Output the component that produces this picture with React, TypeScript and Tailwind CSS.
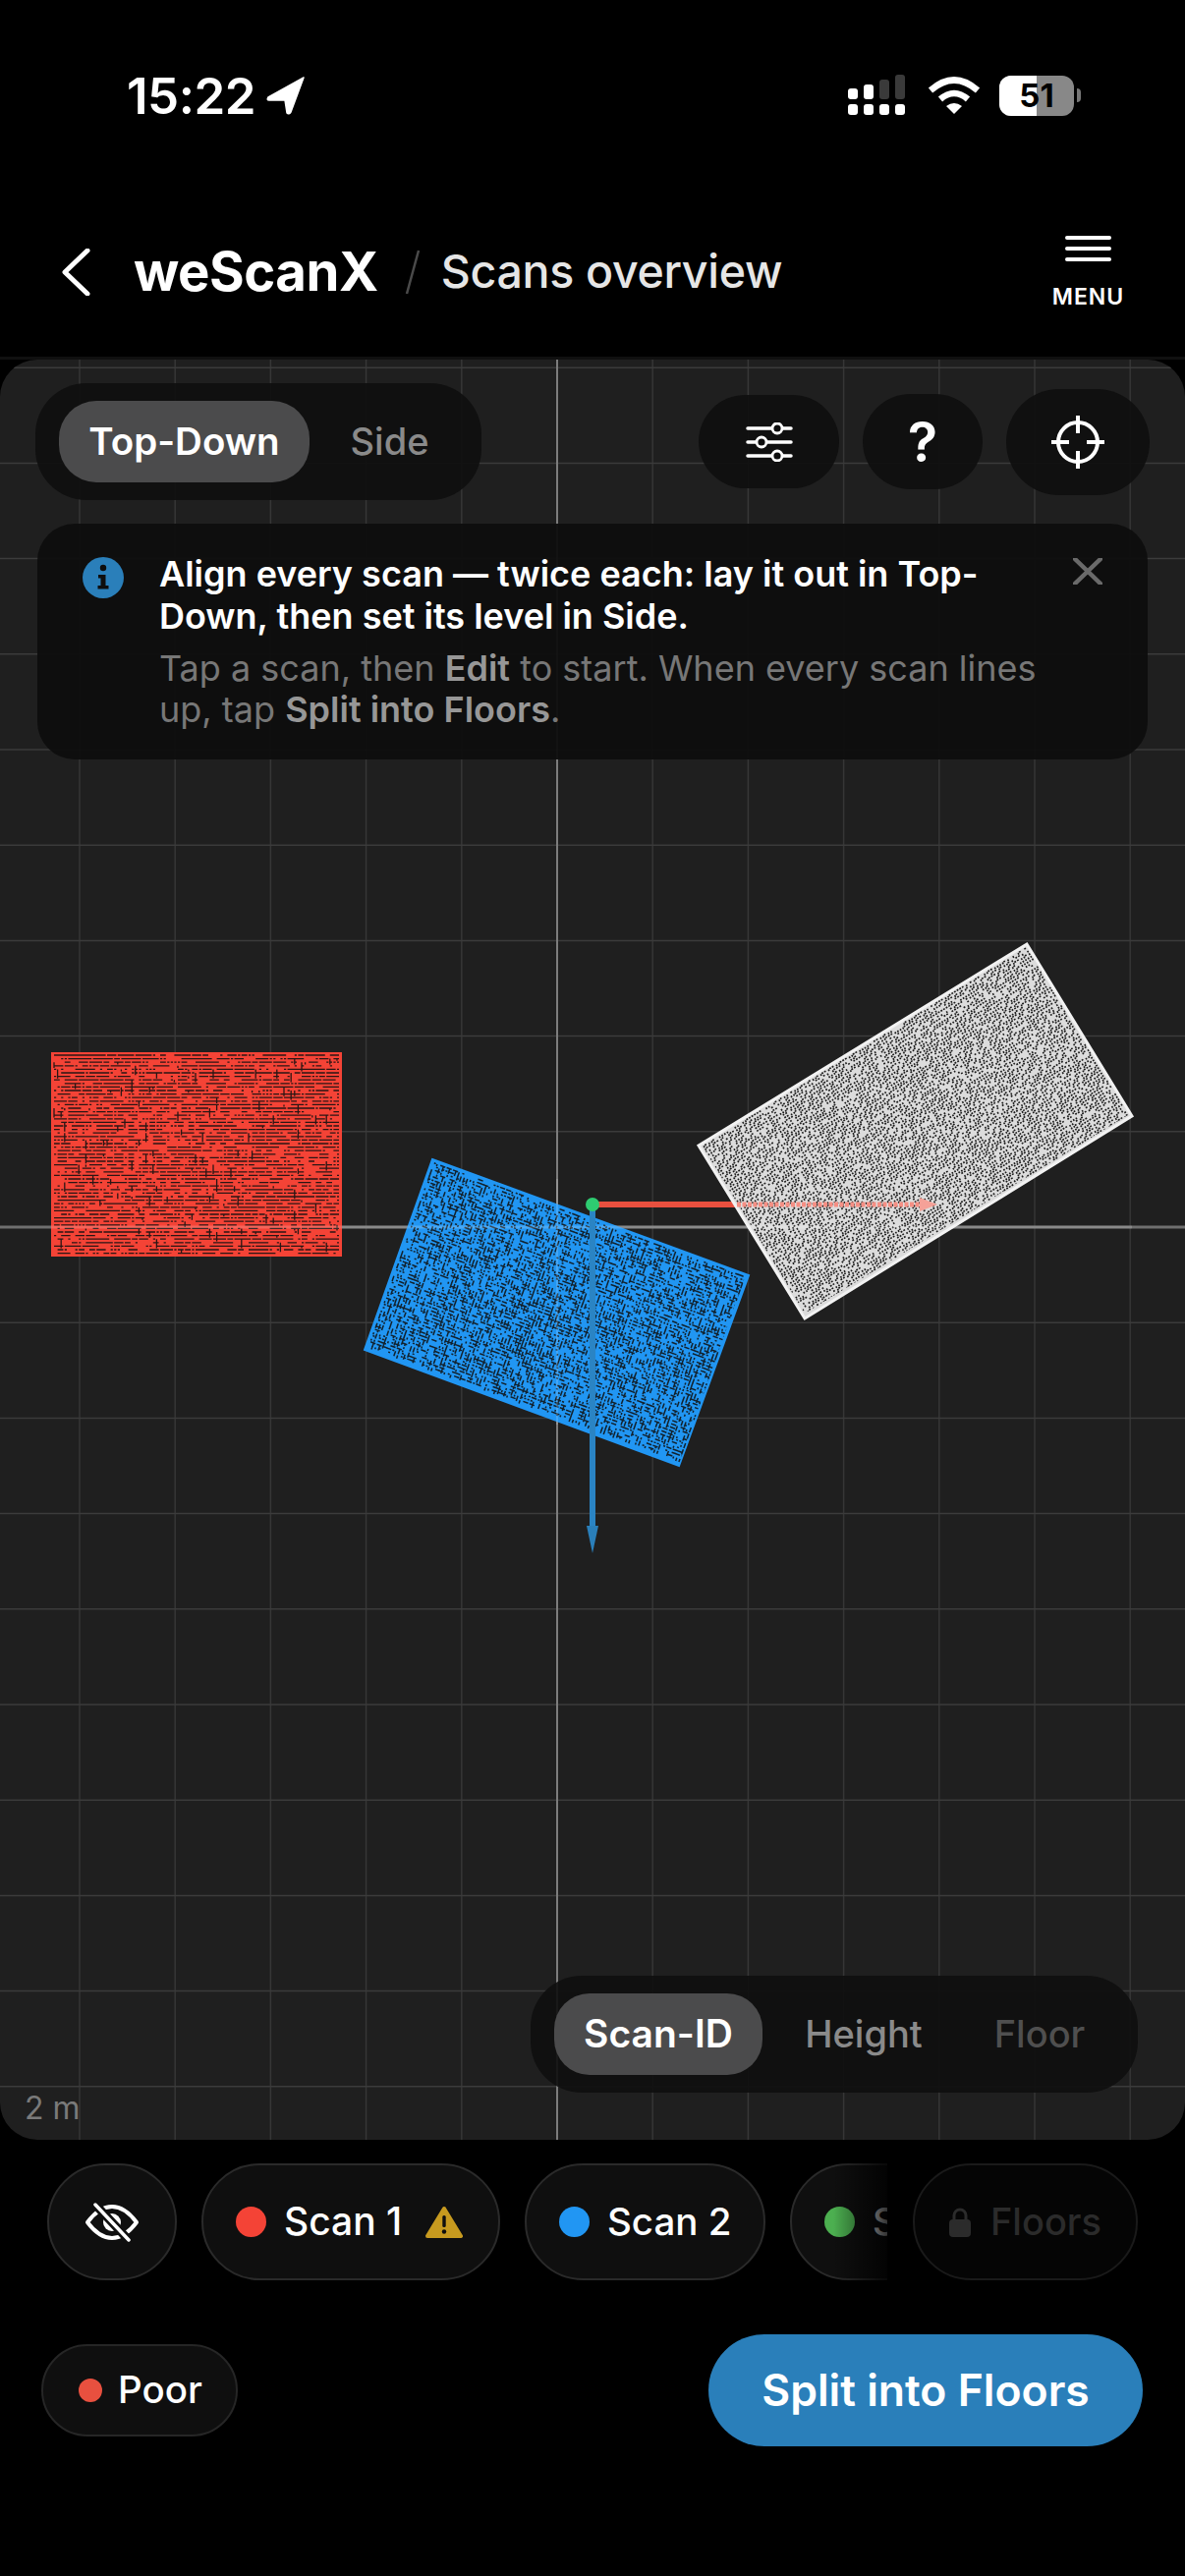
import { useMemo } from 'react';

type Pt = [number, number];

const RED_QUAD: Pt[] = [[52, 1071], [348, 1071], [348, 1279], [52, 1279]];
const BLUE_QUAD: Pt[] = [[440, 1180], [762, 1298], [691, 1492], [371, 1374]];
const WHITE_QUAD: Pt[] = [[1045, 961], [1152, 1136], [819, 1342], [711, 1166]];

function makeRandom(seed: number) {
  let a = seed;
  return () => {
    a = (a + 0x6d2b79f5) | 0;
    let t = Math.imul(a ^ (a >>> 15), 1 | a);
    t = (t + Math.imul(t ^ (t >>> 7), 61 | t)) ^ t;
    return ((t ^ (t >>> 14)) >>> 0) / 4294967296;
  };
}

// dark gaps of a point cloud, as short dashes following the sides of the quad
function speckle(q: Pt[], seed: number, cell: number, density: number, mix: number, maxLen: number) {
  const rnd = makeRandom(seed);
  const w = Math.hypot(q[1][0] - q[0][0], q[1][1] - q[0][1]);
  const h = Math.hypot(q[2][0] - q[1][0], q[2][1] - q[1][1]);
  const at = (x: number, y: number) => {
    const u = Math.min(x / w, 1);
    const v = Math.min(y / h, 1);
    const px = q[0][0] + (q[1][0] - q[0][0]) * u + (q[3][0] - q[0][0]) * v;
    const py = q[0][1] + (q[1][1] - q[0][1]) * u + (q[3][1] - q[0][1]) * v;
    return `${px.toFixed(1)} ${py.toFixed(1)}`;
  };
  const margin = 3;
  let d = '';
  for (let y = margin; y < h - margin; y += cell) {
    for (let x = margin; x < w - margin; x += cell) {
      if (rnd() > density) continue;
      const len = cell * (0.6 + Math.floor(rnd() * maxLen));
      if (rnd() < mix) {
        d += `M${at(x, y)}L${at(x, Math.min(y + len, h - margin))}`;
      } else {
        d += `M${at(x, y)}L${at(Math.min(x + len, w - margin), y)}`;
      }
    }
  }
  return d;
}

const toPoints = (q: Pt[]) => q.map((p) => p.join(',')).join(' ');

function ScanCanvas() {
  const red = useMemo(() => speckle(RED_QUAD, 11, 3.6, 0.6, 0.05, 3), []);
  const blue = useMemo(() => speckle(BLUE_QUAD, 23, 3.4, 0.72, 0.5, 2), []);
  const white = useMemo(() => speckle(WHITE_QUAD, 37, 3.1, 0.82, 0.5, 1), []);

  const xs = Array.from({ length: 12 }, (_, i) => 567 + (i - 5) * 97.2);
  const ys = Array.from({ length: 19 }, (_, i) => 1249 + (i - 9) * 97.2);

  return (
    <svg viewBox="0 366 1206 1812" className="absolute inset-0 h-full w-full">
      {xs.map((x) => (
        <line key={x} x1={x} x2={x} y1={366} y2={2178} stroke="#363636" strokeWidth={1.5} />
      ))}
      {ys.map((y) => (
        <line key={y} x1={0} x2={1206} y1={y} y2={y} stroke="#3b3b3b" strokeWidth={1.5} />
      ))}
      <line x1={567} x2={567} y1={366} y2={2178} stroke="#7c7c7c" strokeWidth={2} />
      <line x1={0} x2={1206} y1={1249} y2={1249} stroke="#6f6f6f" strokeWidth={3} />

      <line x1={603} x2={760} y1={1226} y2={1226} stroke="#e8503f" strokeWidth={6} />

      <polygon points={toPoints(RED_QUAD)} fill="#f44336" />
      <path d={red} stroke="#2a1614" strokeWidth={1.3} fill="none" />

      <polygon points={toPoints(BLUE_QUAD)} fill="#2196f3" stroke="#2196f3" strokeWidth={2} />
      <path d={blue} stroke="#12222e" strokeWidth={1.5} fill="none" />

      <polygon points={toPoints(WHITE_QUAD)} fill="#dcdcdc" stroke="#f2f2f2" strokeWidth={3} />
      <path d={white} stroke="#1c1c1c" strokeWidth={1.6} fill="none" />

      <line x1={52} x2={1152} y1={1249} y2={1249} stroke="#ffffff" strokeOpacity={0.18} strokeWidth={3} />
      <line x1={567} x2={567} y1={1200} y2={1450} stroke="#ffffff" strokeOpacity={0.16} strokeWidth={2} />

      <line x1={750} x2={945} y1={1226} y2={1226} stroke="#f58f84" strokeWidth={5} strokeDasharray="4 1.5" />
      <path d="M936 1219 L954 1226 L936 1233 Z" fill="#f5a198" />

      <line x1={603} x2={603} y1={1230} y2={1560} stroke="#2a84c4" strokeWidth={6} />
      <path d="M597 1553 L609 1553 L603 1581 Z" fill="#2a7fba" />
      <circle cx={603} cy={1226} r={7} fill="#2ecc71" />
    </svg>
  );
}

function StatusBar() {
  return (
    <div className="flex h-[190px] items-start justify-between pt-[72px] pl-[129px] pr-[106px]">
      <div className="flex h-[50px] items-center gap-[11px]">
        <span className="text-[51px] font-semibold leading-none tracking-[-0.5px] text-white">15:22</span>
        <svg width="40" height="39" viewBox="0 0 40 39">
          <path d="M38 1 L2 21 Q0 24 3 24 L19 24 L21 37 Q23 39 25 36 Z" fill="#fff" stroke="#fff" strokeWidth={1.5} strokeLinejoin="round" />
        </svg>
      </div>
      <div className="flex items-center gap-[23px] pt-[4px]">
        <svg width="58" height="42" viewBox="0 0 58 42">
          <rect x="0" y="30" width="10" height="11" rx="3" fill="#fff" />
          <rect x="16" y="30" width="10" height="11" rx="3" fill="#fff" />
          <rect x="32" y="30" width="10" height="11" rx="3" fill="#fff" />
          <rect x="48" y="30" width="10" height="11" rx="3" fill="#fff" />
          <rect x="0" y="14" width="10" height="11" rx="3" fill="#fff" />
          <rect x="16" y="10" width="10" height="15" rx="3" fill="#fff" />
          <rect x="32" y="5" width="10" height="20" rx="3" fill="#3a3a3a" />
          <rect x="48" y="0" width="10" height="25" rx="3" fill="#3a3a3a" />
        </svg>
        <svg width="54" height="38" viewBox="0 0 54 38" className="-mr-[4px]">
          <path d="M3 14 Q27 -7 51 14" fill="none" stroke="#fff" strokeWidth={6.5} />
          <path d="M13 23 Q27 11 41 23" fill="none" stroke="#fff" strokeWidth={6.5} />
          <path d="M19 30 Q27 24 35 30 L27 38 Z" fill="#fff" />
        </svg>
        <div className="flex items-center gap-[3px]">
          <div className="relative flex h-[41px] w-[76px] items-center justify-center overflow-hidden rounded-[12px] bg-[#888888]">
            <div className="absolute inset-y-0 left-0 w-[38px] bg-white" />
            <span className="relative text-[33px] font-bold leading-none text-black">51</span>
          </div>
          <div className="h-[14px] w-[4px] rounded-r-full bg-[#777777]" />
        </div>
      </div>
    </div>
  );
}

function NavBar() {
  return (
    <div className="flex h-[176px] items-center justify-between border-b-[3px] border-[#101010] pl-[62px] pr-[62px]">
      <div className="flex items-center">
        <svg width="32" height="48" viewBox="0 0 32 48" className="mr-[42px]">
          <path d="M27 2 L4 24 L27 46" fill="none" stroke="#fff" strokeWidth={5} strokeLinecap="round" strokeLinejoin="round" />
        </svg>
        <span className="text-[54.5px] font-bold leading-none tracking-[-0.5px] text-white">weScanX</span>
        <svg width="16" height="46" viewBox="0 0 16 46" className="ml-[27px] mr-[21px]">
          <line x1="14" y1="1" x2="2" y2="45" stroke="#4a4a4a" strokeWidth={2.5} />
        </svg>
        <span className="text-[46.5px] font-medium leading-none tracking-[-0.3px] text-[#e6e6e6]">Scans overview</span>
      </div>
      <div className="flex w-[73px] flex-col items-center gap-[25px] pt-[1px]">
        <div className="flex w-[47px] flex-col gap-[7px]">
          <div className="h-[4px] rounded-full bg-white" />
          <div className="h-[4px] rounded-full bg-white" />
          <div className="h-[4px] rounded-full bg-white" />
        </div>
        <span className="text-[23px] font-semibold leading-none tracking-[1px] text-white">MENU</span>
      </div>
    </div>
  );
}

function ViewToggle() {
  return (
    <div className="flex h-[119px] w-[454px] items-center rounded-[52px] bg-[#0e0e0e]/90 pl-[24px] pr-[24px]">
      <div className="flex h-[83px] w-[255px] items-center justify-center rounded-[38px] bg-[#4b4b4c] text-[38.5px] font-semibold text-white">
        Top-Down
      </div>
      <div className="flex flex-1 justify-center pl-[12px] text-[38px] font-medium text-[#8a8a8a]">Side</div>
    </div>
  );
}

function CanvasButtons() {
  return (
    <div className="flex items-center gap-[24px]">
      <div className="flex h-[95px] w-[143px] items-center justify-center rounded-full bg-[#0e0e0e]/90">
        <svg width="48" height="40" viewBox="0 0 48 40">
          <g stroke="#fff" strokeWidth={3.5} strokeLinecap="round">
            <line x1="2" y1="6" x2="46" y2="6" />
            <line x1="2" y1="20" x2="46" y2="20" />
            <line x1="2" y1="34" x2="46" y2="34" />
          </g>
          <g fill="#0e0e0e" stroke="#fff" strokeWidth={2.8}>
            <circle cx="32" cy="6" r="5" />
            <circle cx="16" cy="20" r="5" />
            <circle cx="32" cy="34" r="5" />
          </g>
        </svg>
      </div>
      <div className="flex h-[97px] w-[122px] items-center justify-center rounded-full bg-[#0e0e0e]/90 text-[56px] font-semibold leading-none text-white">
        ?
      </div>
      <div className="flex h-[108px] w-[146px] items-center justify-center rounded-full bg-[#0e0e0e]/90">
        <svg width="56" height="56" viewBox="0 0 56 56">
          <circle cx="28" cy="28" r="20" fill="none" stroke="#fff" strokeWidth={4} />
          <g stroke="#fff" strokeWidth={4}>
            <line x1="28" y1="1" x2="28" y2="19" />
            <line x1="28" y1="37" x2="28" y2="55" />
            <line x1="1" y1="28" x2="19" y2="28" />
            <line x1="37" y1="28" x2="55" y2="28" />
          </g>
        </svg>
      </div>
    </div>
  );
}

function InfoBanner() {
  return (
    <div className="relative mx-[38px] mt-[24px] flex h-[240px] gap-[36px] rounded-[38px] bg-[#0e0e0e]/95 pl-[46px] pt-[30px]">
      <svg width="42" height="42" viewBox="0 0 42 42" className="mt-[4px] shrink-0">
        <circle cx="21" cy="21" r="21" fill="#2a7fba" />
        <circle cx="21" cy="11" r="3.2" fill="#0e0e0e" />
        <path d="M16 18 H23.5 V29 H26.5 V32.5 H15.5 V29 H18.5 V21.5 H16 Z" fill="#0e0e0e" />
      </svg>
      <div>
        <p className="whitespace-nowrap text-[36px] font-semibold leading-[43px] text-white">
          Align every scan — twice each: lay it out in Top-
          <br />
          Down, then set its level in Side.
        </p>
        <p className="mt-[11px] whitespace-nowrap text-[36px] leading-[41.5px] text-[#777777]">
          Tap a scan, then <span className="font-semibold text-[#979797]">Edit</span> to start. When every scan lines
          <br />
          up, tap <span className="font-semibold text-[#979797]">Split into Floors</span>.
        </p>
      </div>
      <svg width="30" height="27" viewBox="0 0 30 27" className="absolute right-[46px] top-[35px]">
        <path d="M2 1 L28 26 M28 1 L2 26" stroke="#6a6a6a" strokeWidth={4.5} strokeLinecap="round" />
      </svg>
    </div>
  );
}

function ColorToggle() {
  return (
    <div className="flex h-[119px] w-[618px] items-center rounded-[52px] bg-[#0e0e0e]/90 pl-[24px] pr-[24px]">
      <div className="flex h-[83px] w-[212px] items-center justify-center rounded-[36px] bg-[#4b4b4c] text-[39px] font-semibold text-white">
        Scan-ID
      </div>
      <div className="flex w-[206px] justify-center text-[38px] font-medium text-[#8a8a8a]">Height</div>
      <div className="flex flex-1 justify-center text-[38px] font-medium text-[#4f4f4f]">Floor</div>
    </div>
  );
}

function Dot({ className }: { className: string }) {
  return <span className={`h-[31px] w-[31px] shrink-0 rounded-full ${className}`} />;
}

function ChipRow() {
  return (
    <div className="mt-[24px] flex h-[119px] items-stretch pl-[48px] pr-[48px]">
      <div className="relative flex w-[855px] gap-[25px] overflow-hidden">
        <div className="flex w-[132px] shrink-0 items-center justify-center rounded-full border-2 border-[#2a2a2a] bg-[#0f0f0f]">
          <svg width="56" height="40" viewBox="0 0 56 40">
            <path d="M3 20 Q15 4 28 4 Q41 4 53 20 Q41 36 28 36 Q15 36 3 20 Z" fill="none" stroke="#fff" strokeWidth={4} strokeLinejoin="round" />
            <circle cx="28" cy="20" r="9" fill="#fff" />
            <line x1="11" y1="2" x2="45" y2="38" stroke="#0f0f0f" strokeWidth={9} />
            <line x1="11" y1="2" x2="45" y2="38" stroke="#fff" strokeWidth={3.5} strokeLinecap="round" />
          </svg>
        </div>
        <div className="flex w-[304px] shrink-0 items-center rounded-full border-2 border-[#2a2a2a] bg-[#0f0f0f] pl-[33px]">
          <Dot className="bg-[#f44336]" />
          <span className="ml-[18px] text-[39px] font-medium text-white">Scan 1</span>
          <svg width="38" height="34" viewBox="0 0 38 34" className="ml-[24px]">
            <path d="M19 3 L36 31 H2 Z" fill="#c79a1f" stroke="#c79a1f" strokeWidth={4} strokeLinejoin="round" />
            <rect x="17.3" y="10" width="3.4" height="12" rx="1.5" fill="#0f0f0f" />
            <circle cx="19" cy="26.5" r="2.2" fill="#0f0f0f" />
          </svg>
        </div>
        <div className="flex w-[245px] shrink-0 items-center rounded-full border-2 border-[#2a2a2a] bg-[#0f0f0f] pl-[33px]">
          <Dot className="bg-[#2196f3]" />
          <span className="ml-[18px] text-[38.5px] font-medium text-white">Scan 2</span>
        </div>
        <div className="flex w-[245px] shrink-0 items-center rounded-full border-2 border-[#2a2a2a] bg-[#0f0f0f] pl-[33px]">
          <Dot className="bg-[#4caf50]" />
          <span className="ml-[18px] text-[38.5px] font-medium text-white">Scan 3</span>
        </div>
        <div className="absolute inset-y-0 right-0 w-[55px] bg-gradient-to-r from-transparent to-black/80" />
      </div>
      <div className="ml-[26px] flex flex-1 items-center justify-center gap-[20px] rounded-full border-2 border-[#1a1a1a] bg-[#050505] text-[38px] font-medium text-[#2b2b2b]">
        <svg width="22" height="30" viewBox="0 0 22 30">
          <path d="M5 13 V8 A6 6 0 0 1 17 8 V13" fill="none" stroke="#2b2b2b" strokeWidth={3} />
          <rect x="0" y="12" width="22" height="18" rx="4" fill="#2b2b2b" />
        </svg>
        Floors
      </div>
    </div>
  );
}

function FooterRow() {
  return (
    <div className="mt-[55px] flex items-center justify-between pl-[42px] pr-[43px]">
      <div className="flex h-[94px] w-[200px] items-center rounded-full border-2 border-[#262626] bg-[#0f0f0f] pl-[36px]">
        <span className="h-[24px] w-[24px] rounded-full bg-[#e8503f]" />
        <span className="ml-[16px] text-[38.5px] font-medium text-white">Poor</span>
      </div>
      <div className="flex h-[114px] w-[442px] items-center justify-center rounded-[57px] bg-[#2a7fba] text-[44.5px] font-semibold text-white">
        Split into Floors
      </div>
    </div>
  );
}

export default function App() {
  return (
    <div className="h-[2622px] w-[1206px] overflow-hidden bg-black font-[Inter,sans-serif]">
      <StatusBar />
      <NavBar />
      <div className="relative h-[1812px] overflow-hidden rounded-[38px] bg-[#1f1f1f]">
        <ScanCanvas />
        <div className="absolute inset-0 flex flex-col">
          <div className="flex items-center justify-between pl-[36px] pr-[36px] pt-[24px]">
            <ViewToggle />
            <CanvasButtons />
          </div>
          <InfoBanner />
          <div className="mt-auto flex justify-end pr-[48px]">
            <ColorToggle />
          </div>
          <div className="flex h-[48px] items-start pl-[25px] text-[32px] leading-[32px] text-[#7a7a7a]">2 m</div>
        </div>
      </div>
      <ChipRow />
      <FooterRow />
    </div>
  );
}
